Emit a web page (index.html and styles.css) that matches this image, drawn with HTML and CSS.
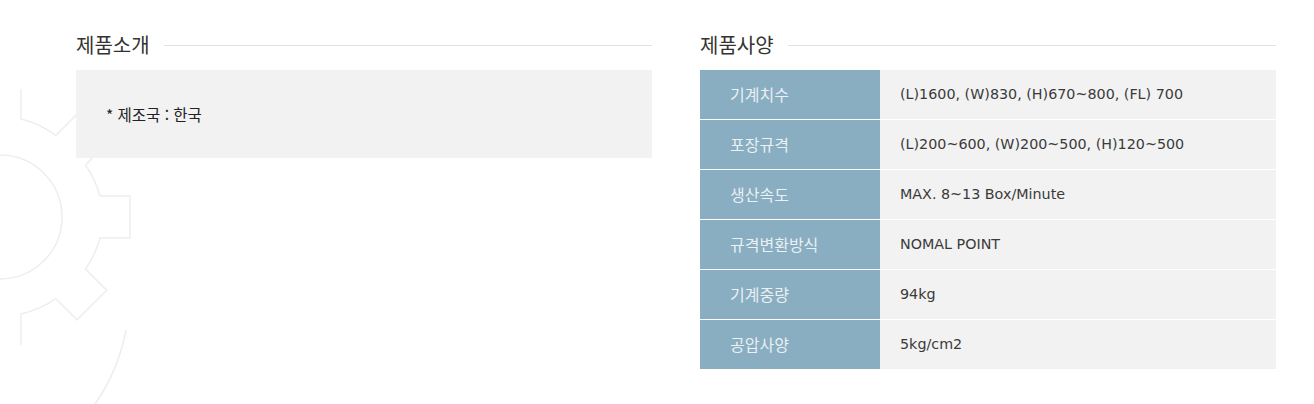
FILE: index.html
```html
<!DOCTYPE html>
<html lang="ko">
<head>
<meta charset="utf-8">
<link rel="stylesheet" href="styles.css">
</head>
<body>
<div class="page">
  <svg class="gear" width="200" height="404" viewBox="0 0 200 404" aria-hidden="true">
    <g fill="none" stroke="#eeeeee" stroke-width="1.5">
      <path d="M 100 196 L 130 196 L 130 238 L 100 238 A 100 100 0 0 1 85.5 269 L 106.7 290.2 L 77 319.9 L 55.8 298.7 A 100 100 0 0 1 21 314 L 21 345"/>
      <path d="M 21 89 L 21 119 A 100 100 0 0 1 55.8 135.3 L 77 114.1 L 106.7 143.8 L 85.5 165 A 100 100 0 0 1 100 196"/>
      <circle cx="0" cy="217" r="62"/>
      <path d="M 126 330 A 190 190 0 0 1 95 404"/>
    </g>
  </svg>
  <div class="columns">
    <section class="col">
      <div class="heading"><h2>제품소개</h2><span class="rule"></span></div>
      <div class="intro">* 제조국 : 한국</div>
    </section>
    <section class="col">
      <div class="heading"><h2>제품사양</h2><span class="rule"></span></div>
      <div class="spec">
        <div class="th">기계치수</div><div class="td">(L)1600, (W)830, (H)670~800, (FL) 700</div>
        <div class="th">포장규격</div><div class="td">(L)200~600, (W)200~500, (H)120~500</div>
        <div class="th">생산속도</div><div class="td">MAX. 8~13 Box/Minute</div>
        <div class="th">규격변환방식</div><div class="td">NOMAL POINT</div>
        <div class="th">기계중량</div><div class="td">94kg</div>
        <div class="th">공압사양</div><div class="td">5kg/cm2</div>
      </div>
    </section>
  </div>
</div>
</body>
</html>
```
FILE: styles.css
```css
html, body {
  margin: 0;
  padding: 0;
  background: #fff;
}
body {
  font-family: "Noto Sans CJK KR", "Noto Sans", sans-serif;
  color: #333;
  width: 1314px;
  height: 404px;
  overflow: hidden;
}
.page {
  position: relative;
  height: 404px;
}
.gear {
  position: absolute;
  left: 0;
  top: 0;
  z-index: 0;
}
.columns {
  position: relative;
  z-index: 1;
  display: grid;
  grid-template-columns: 576px 576px;
  column-gap: 48px;
  padding: 33px 0 0 76px;
}
.heading {
  display: flex;
  align-items: center;
  gap: 14px;
  height: 24px;
  margin-bottom: 13px;
}
.heading h2 {
  margin: 0 0 1px;
  font-size: 20px;
  font-weight: 400;
  color: #333;
  line-height: 24px;
  white-space: nowrap;
}
.rule {
  flex: 1;
  height: 1px;
  background: #e2e2e2;
  margin-top: 1px;
}
.intro {
  background: #f2f2f2;
  height: 88px;
  display: flex;
  align-items: center;
  padding-left: 30px;
  padding-bottom: 1px;
  box-sizing: border-box;
  font-size: 15.5px;
  color: #222;
}
.spec {
  display: grid;
  grid-template-columns: 180px 1fr;
  grid-auto-rows: 49px;
  row-gap: 1px;
  background: #fff;
}
.th {
  background: #89adc1;
  color: #eaf0f3;
  font-size: 16px;
  display: flex;
  align-items: center;
  padding-left: 30px;
  padding-bottom: 2px;
}
.td {
  background: #f2f2f2;
  color: #3a3a3a;
  font-family: "DejaVu Sans", "Noto Sans CJK KR", sans-serif;
  font-size: 14.3px;
  display: flex;
  align-items: center;
  padding-left: 20px;
  padding-bottom: 1px;
}
```
